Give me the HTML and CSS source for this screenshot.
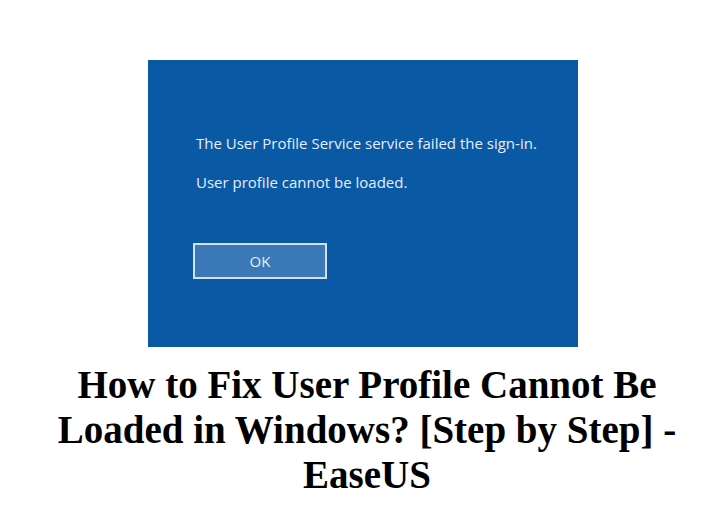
FILE: index.html
```html
<!DOCTYPE html>
<html>
<head>
<meta charset="utf-8">
<link rel="stylesheet" href="styles.css">
</head>
<body>
<div class="page">
  <div class="dialog">
    <p class="msg msg-first">The User Profile Service service failed the sign-in.</p>
    <p class="msg">User profile cannot be loaded.</p>
    <div class="btn">OK</div>
  </div>
  <h1 class="title">How to Fix User Profile Cannot Be Loaded in Windows? [Step by Step] - EaseUS</h1>
</div>
</body>
</html>
```
FILE: styles.css
```css
html, body {
  margin: 0;
  padding: 0;
  background: #ffffff;
}
.page {
  width: 720px;
  height: 506px;
  display: flex;
  flex-direction: column;
  align-items: flex-start;
}
.dialog {
  box-sizing: border-box;
  width: 430px;
  height: 287px;
  margin: 60px 0 0 148px;
  background: #0a59a5;
  padding: 73px 0 0 48px;
  display: flex;
  flex-direction: column;
  align-items: flex-start;
}
.msg {
  margin: 0;
  font-family: "Open Sans", "Noto Sans", sans-serif;
  font-size: 15px;
  line-height: 20px;
  color: #e6eef7;
  white-space: nowrap;
}
.msg-first {
  margin-bottom: 19px;
}
.btn {
  box-sizing: border-box;
  width: 134px;
  height: 36px;
  margin: 51px 0 0 -3px;
  border: 2px solid #d4e2f0;
  background: #3b78b7;
  color: #e6eef7;
  font-family: "Open Sans", "Noto Sans", sans-serif;
  font-size: 15px;
  display: flex;
  align-items: center;
  justify-content: center;
}
.title {
  box-sizing: border-box;
  width: 720px;
  margin: 15px 0 0 0;
  padding: 0 0 0 14px;
  font-family: "Liberation Serif", "Times New Roman", serif;
  font-weight: bold;
  font-size: 39px;
  line-height: 45px;
  text-align: center;
  color: #000000;
}
```
